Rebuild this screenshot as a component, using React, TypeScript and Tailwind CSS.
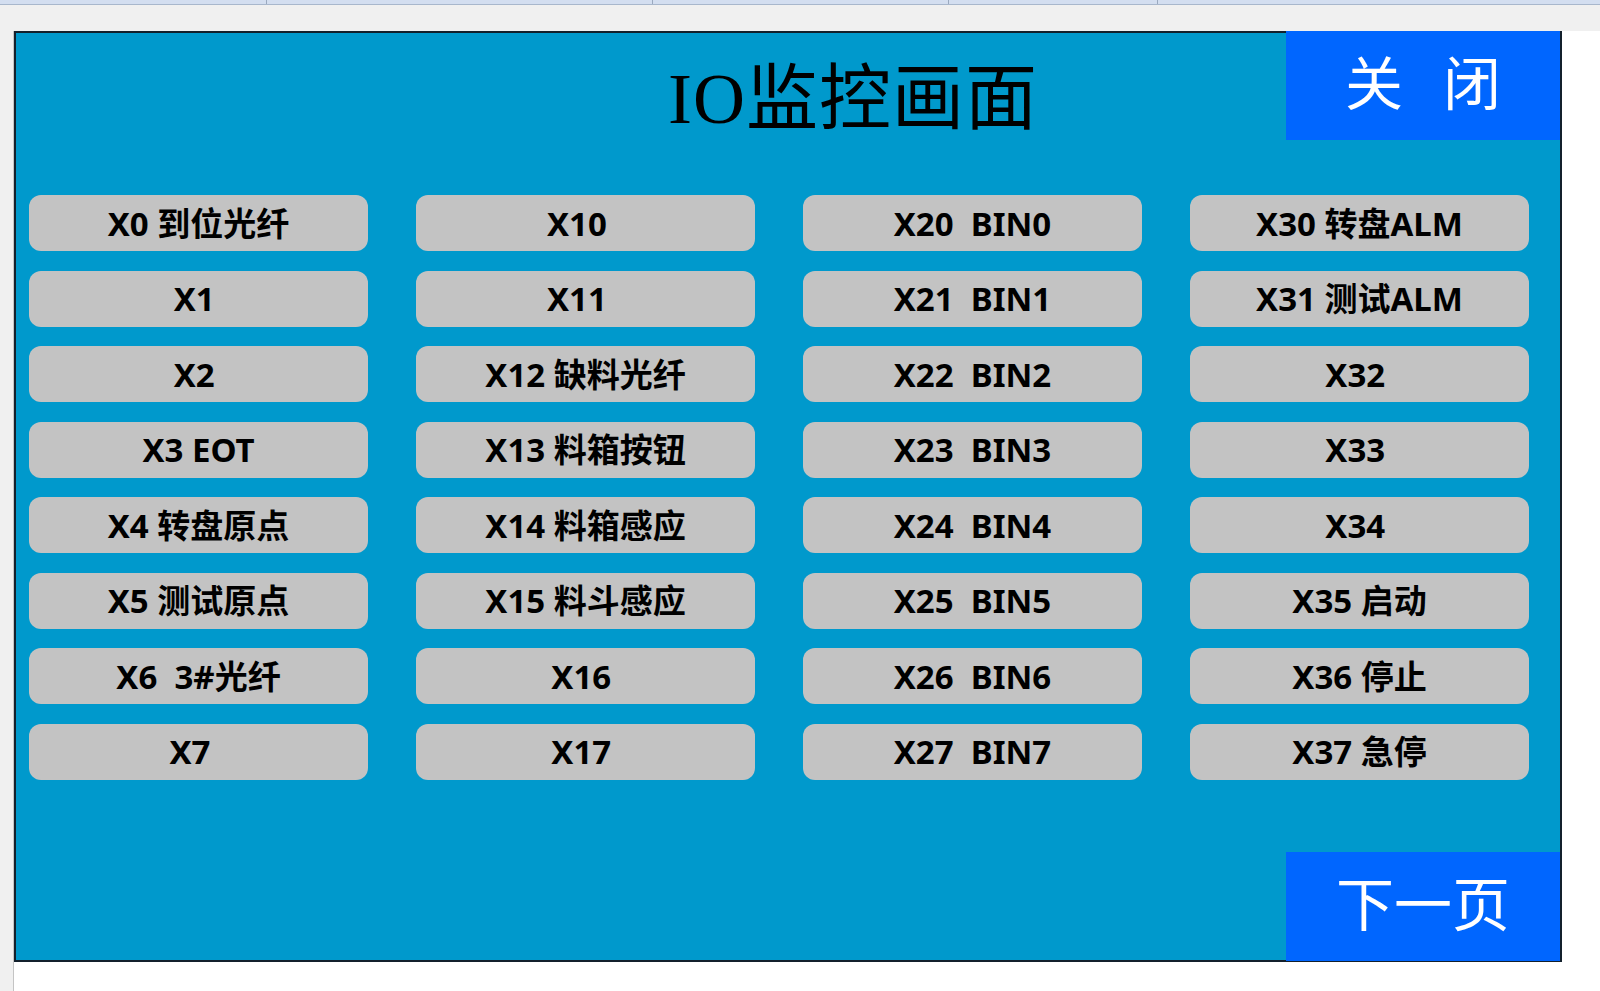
const rows: string[][] = [
  ["X0 到位光纤", "X10  ", "X20  BIN0", "X30 转盘ALM"],
  ["X1 ", "X11  ", "X21  BIN1", "X31 测试ALM"],
  ["X2 ", "X12 缺料光纤", "X22  BIN2", "X32 "],
  ["X3 EOT", "X13 料箱按钮", "X23  BIN3", "X33 "],
  ["X4 转盘原点", "X14 料箱感应", "X24  BIN4", "X34 "],
  ["X5 测试原点", "X15 料斗感应", "X25  BIN5", "X35 启动"],
  ["X6  3#光纤", "X16 ", "X26  BIN6", "X36 停止"],
  ["X7  ", "X17 ", "X27  BIN7", "X37 急停"],
]

const cells = rows.flat()

function Pill({ label }: { label: string }) {
  return (
    <div className="h-[56px] rounded-[12px] bg-[#c3c3c3] flex items-center justify-center">
      <span className="whitespace-pre font-['Noto_Sans','Noto_Sans_CJK_SC',sans-serif] font-bold text-[33px] leading-none text-black">
        {label}
      </span>
    </div>
  )
}

export default function App() {
  return (
    <div className="w-[1600px] h-[991px] bg-white flex flex-col overflow-hidden">
      {/* editor tab strip */}
      <div className="h-[5px] bg-[#d3def0] border-b border-[#a8b7cc] flex">
        <div className="w-[267px] border-r border-[#9aa9bf]" />
        <div className="w-[386px] border-r border-[#9aa9bf]" />
        <div className="w-[296px] border-r border-[#9aa9bf]" />
        <div className="w-[209px] border-r border-[#9aa9bf]" />
      </div>
      <div className="h-[26px] bg-[#f0f0f0]" />

      <div className="flex flex-1">
        <div className="w-[14px] bg-[#f0f0f0] border-r border-[#c4c4c4]" />

        <div className="w-[1548px] h-[931px] border-2 border-[#13202c] bg-[#0099cc] flex flex-col">
          <div className="h-[162px] flex items-start">
            <div className="flex-1 pl-[652px] pt-[30px]">
              <h1 className="font-['Liberation_Serif','Noto_Sans_CJK_SC',serif] text-[72px] leading-none tracking-[1px] text-black font-normal whitespace-nowrap">
                IO监控画面
              </h1>
            </div>
            <button className="w-[274px] h-[109px] -mt-[2px] bg-[#0066ff] flex items-center justify-center gap-[40px] text-white font-['Liberation_Serif','Noto_Sans_CJK_SC',serif] text-[58px] leading-none">
              <span>关</span>
              <span>闭</span>
            </button>
          </div>

          <div className="pl-[13px] grid grid-cols-[repeat(4,339px)] gap-x-[48px] gap-y-[19.5px]">
            {cells.map((c) => (
              <Pill key={c} label={c} />
            ))}
          </div>

          <div className="flex-1" />

          <div className="flex justify-end">
            <button className="w-[274px] h-[109px] -mb-[1px] bg-[#0066ff] flex items-center justify-center text-white font-['Liberation_Serif','Noto_Sans_CJK_SC',serif] text-[58px] leading-none">
              下一页
            </button>
          </div>
        </div>
      </div>
    </div>
  )
}
